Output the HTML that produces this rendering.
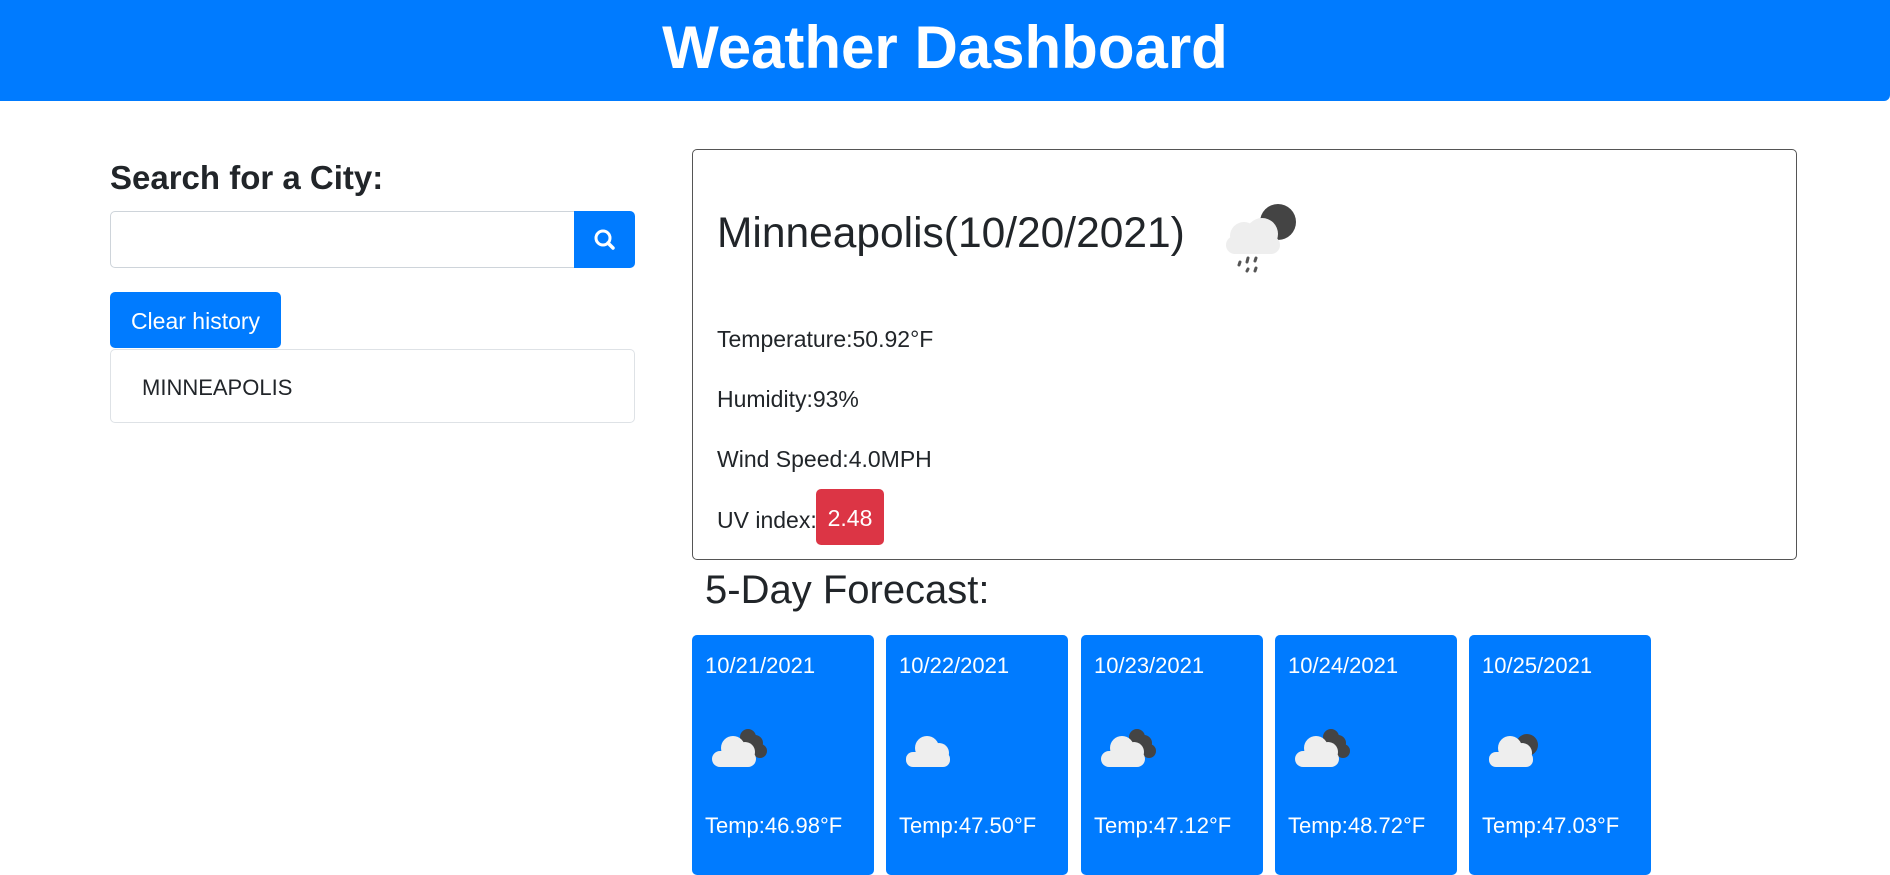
<!DOCTYPE html>
<html><head><style>
*{box-sizing:border-box;margin:0;padding:0}
body{width:1890px;height:861px;overflow:hidden;background:#fff;font-family:"Liberation Sans",sans-serif;color:#212529;position:relative}
.hdr{position:absolute;left:0;top:0;width:1890px;height:101px;background:#007bff;border-bottom-right-radius:6px;color:#fff;font-weight:bold;font-size:60px;text-align:center;line-height:96px}
.abs{position:absolute}
.fc{position:absolute;top:635px;width:182px;height:240px;background:#007bff;border-radius:5px;color:#fff;font-size:22px}
.fc .d{position:absolute;left:13px;top:18px}
.fc .t{position:absolute;left:13px;top:178px}
.fc svg{position:absolute;left:18px;top:88px}
p.l{position:absolute;left:717px;font-size:23px}
</style></head><body>
<div class="hdr">Weather Dashboard</div>
<div class="abs" style="left:110px;top:159px;font-size:33px;font-weight:bold">Search for a City:</div>
<div class="abs" style="left:110px;top:211px;width:465px;height:57px;border:1px solid #ced4da;border-radius:5px 0 0 5px"></div>
<div class="abs" style="left:574px;top:211px;width:61px;height:57px;background:#007bff;border-radius:0 5px 5px 0">
<svg width="61" height="57"><circle cx="29" cy="27" r="7" fill="none" stroke="#fff" stroke-width="3"/><line x1="34" y1="32" x2="39" y2="37" stroke="#fff" stroke-width="3.5" stroke-linecap="round"/></svg></div>
<div class="abs" style="left:110px;top:292px;width:171px;height:56px;background:#007bff;border-radius:5px;color:#fff;font-size:23px;line-height:59px;text-align:center">Clear history</div>
<div class="abs" style="left:110px;top:349px;width:525px;height:74px;border:1px solid #dee2e6;border-radius:5px;font-size:22px;line-height:76px;padding-left:31px">MINNEAPOLIS</div>
<div class="abs" style="left:692px;top:149px;width:1105px;height:411px;border:1px solid #555;border-radius:5px"></div>
<div class="abs" style="left:717px;top:210px;font-size:42.5px">Minneapolis(10/20/2021)</div>
<svg class="abs" style="left:1218px;top:198px" width="86" height="82"><circle cx="60" cy="24" r="18" fill="#444"/><circle cx="26" cy="38" r="14" fill="#eee"/><circle cx="44" cy="36" r="16" fill="#eee"/><rect x="8" y="38" width="54" height="18" rx="9" fill="#eee"/><g stroke="#555" stroke-width="3" stroke-linecap="round"><line x1="22" y1="64" x2="21" y2="67"/><line x1="30" y1="60" x2="29" y2="64"/><line x1="38" y1="60" x2="37" y2="63"/><line x1="30" y1="71" x2="29" y2="73"/><line x1="38" y1="70" x2="37" y2="73"/></g></svg>
<p class="l" style="top:326px">Temperature:50.92°F</p>
<p class="l" style="top:386px">Humidity:93%</p>
<p class="l" style="top:446px">Wind Speed:4.0MPH</p>
<p class="l" style="top:507px">UV index:</p>
<div class="abs" style="left:816px;top:489px;width:68px;height:56px;background:#dc3545;border-radius:5px;color:#fff;font-size:23px;line-height:58px;text-align:center">2.48</div>
<div class="abs" style="left:705px;top:568px;font-size:40px">5-Day Forecast:</div>
<div class="fc" style="left:692px"><span class="d">10/21/2021</span><svg width="64" height="54"><circle cx="38" cy="14" r="8" fill="#444"/><circle cx="45" cy="20" r="8" fill="#444"/><circle cx="50" cy="28" r="7" fill="#444"/><circle cx="23" cy="25" r="12" fill="#eee"/><circle cx="35" cy="29" r="10" fill="#eee"/><rect x="2" y="28" width="44" height="16" rx="8" fill="#eee"/></svg><span class="t">Temp:46.98°F</span></div>
<div class="fc" style="left:886px"><span class="d">10/22/2021</span><svg width="64" height="54"><circle cx="23" cy="25" r="12" fill="#eee"/><circle cx="35" cy="30" r="10" fill="#eee"/><rect x="2" y="29" width="44" height="15" rx="7" fill="#eee"/></svg><span class="t">Temp:47.50°F</span></div>
<div class="fc" style="left:1081px"><span class="d">10/23/2021</span><svg width="64" height="54"><circle cx="38" cy="14" r="8" fill="#444"/><circle cx="45" cy="20" r="8" fill="#444"/><circle cx="50" cy="28" r="7" fill="#444"/><circle cx="23" cy="25" r="12" fill="#eee"/><circle cx="35" cy="29" r="10" fill="#eee"/><rect x="2" y="28" width="44" height="16" rx="8" fill="#eee"/></svg><span class="t">Temp:47.12°F</span></div>
<div class="fc" style="left:1275px"><span class="d">10/24/2021</span><svg width="64" height="54"><circle cx="38" cy="14" r="8" fill="#444"/><circle cx="45" cy="20" r="8" fill="#444"/><circle cx="50" cy="28" r="7" fill="#444"/><circle cx="23" cy="25" r="12" fill="#eee"/><circle cx="35" cy="29" r="10" fill="#eee"/><rect x="2" y="28" width="44" height="16" rx="8" fill="#eee"/></svg><span class="t">Temp:48.72°F</span></div>
<div class="fc" style="left:1469px"><span class="d">10/25/2021</span><svg width="64" height="54"><circle cx="40" cy="22" r="11" fill="#444"/><circle cx="23" cy="25" r="12" fill="#eee"/><circle cx="35" cy="30" r="10" fill="#eee"/><rect x="2" y="29" width="44" height="15" rx="7" fill="#eee"/></svg><span class="t">Temp:47.03°F</span></div>
</body></html>
